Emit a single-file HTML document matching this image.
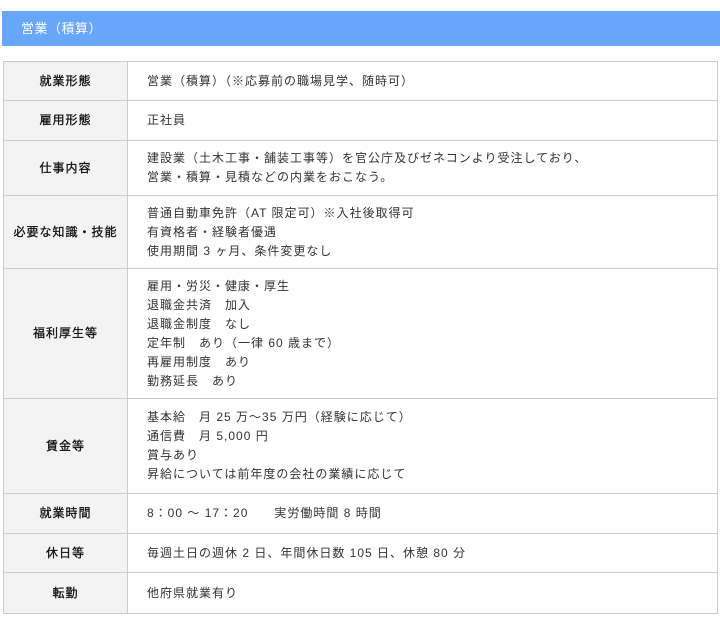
<!DOCTYPE html>
<html><head><meta charset="utf-8"><style>
body{margin:0;background:#fff;font-family:"Liberation Sans","Noto Sans CJK JP",sans-serif;color:#333;}
.h{position:absolute;left:2px;top:11px;width:718px;height:35px;background:#66a6fb;color:#fff;font-size:13px;line-height:35px;padding-left:19px;box-sizing:border-box;letter-spacing:0.5px}
table{position:absolute;left:3px;top:61px;width:715px;border-collapse:collapse;font-size:12px;letter-spacing:1px}
td{border:1px solid #ccc;line-height:19px;padding:0;vertical-align:middle}
td.l{width:123px;background:#f3f3f3;text-align:center;font-weight:normal;color:#111;-webkit-text-stroke:0.3px #111}
td.r{padding-left:19px}
</style></head><body>
<div class="h">営業（積算）</div>
<table>
<tr style="height:39px"><td class="l">就業形態</td><td class="r">営業（積算）（※応募前の職場見学、随時可）</td></tr>
<tr style="height:40px"><td class="l">雇用形態</td><td class="r">正社員</td></tr>
<tr style="height:55px"><td class="l">仕事内容</td><td class="r">建設業（土木工事・舗装工事等）を官公庁及びゼネコンより受注しており、<br>営業・積算・見積などの内業をおこなう。</td></tr>
<tr style="height:73px"><td class="l">必要な知識・技能</td><td class="r">普通自動車免許（AT 限定可）※入社後取得可<br>有資格者・経験者優遇<br>使用期間 3 ヶ月、条件変更なし</td></tr>
<tr style="height:130px"><td class="l">福利厚生等</td><td class="r">雇用・労災・健康・厚生<br>退職金共済　加入<br>退職金制度　なし<br>定年制　あり（一律 60 歳まで）<br>再雇用制度　あり<br>勤務延長　あり</td></tr>
<tr style="height:95px"><td class="l">賃金等</td><td class="r">基本給　月 25 万〜35 万円（経験に応じて）<br>通信費　月 5,000 円<br>賞与あり<br>昇給については前年度の会社の業績に応じて</td></tr>
<tr style="height:40px"><td class="l">就業時間</td><td class="r">8：00 〜 17：20　　実労働時間 8 時間</td></tr>
<tr style="height:39px"><td class="l">休日等</td><td class="r">毎週土日の週休 2 日、年間休日数 105 日、休憩 80 分</td></tr>
<tr style="height:41px"><td class="l">転勤</td><td class="r">他府県就業有り</td></tr>
</table>
</body></html>
